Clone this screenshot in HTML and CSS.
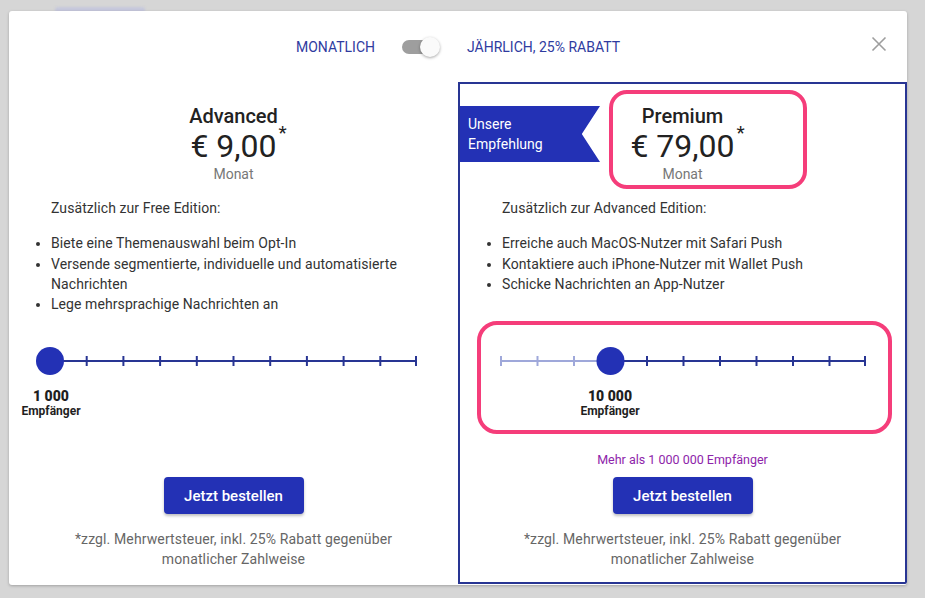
FILE: index.html
```html
<!DOCTYPE html>
<html lang="de">
<head>
<meta charset="utf-8">
<title>Preise</title>
<link rel="stylesheet" href="styles.css">
</head>
<body>
<div class="backdrop-bar"></div>
<div class="modal">
  <header class="topbar">
    <span class="period">Monatlich</span>
    <span class="switch"><span class="switch-track"></span><span class="switch-thumb"></span></span>
    <span class="period">Jährlich, 25% Rabatt</span>
    <button class="close" aria-label="Schließen">
      <svg width="16" height="16" viewBox="0 0 16 16"><path d="M1.5 1.5L14.5 14.5M14.5 1.5L1.5 14.5" stroke="#9e9e9e" stroke-width="1.6" fill="none"/></svg>
    </button>
  </header>
  <div class="plans">
    <section class="plan">
      <div class="plan-head">
        <div class="plan-title">Advanced</div>
        <div class="plan-price"><span class="amount">€ 9,00<sup class="star">*</sup></span></div>
        <div class="plan-unit">Monat</div>
      </div>
      <div class="features">
        <p class="features-intro">Zusätzlich zur Free Edition:</p>
        <ul class="feature-list">
          <li>Biete eine Themenauswahl beim Opt-In</li>
          <li>Versende segmentierte, individuelle und automatisierte Nachrichten</li>
          <li>Lege mehrsprachige Nachrichten an</li>
        </ul>
      </div>
      <div class="slider">
        <svg width="449" height="30" viewBox="0 0 449 30">
          <line x1="41" y1="15" x2="408" y2="15" stroke="#283593" stroke-width="2"/>
          <g stroke="#283593" stroke-width="2">
            <line x1="77.7" y1="10" x2="77.7" y2="20"/>
            <line x1="114.4" y1="10" x2="114.4" y2="20"/>
            <line x1="151.1" y1="10" x2="151.1" y2="20"/>
            <line x1="187.8" y1="10" x2="187.8" y2="20"/>
            <line x1="224.5" y1="10" x2="224.5" y2="20"/>
            <line x1="261.2" y1="10" x2="261.2" y2="20"/>
            <line x1="297.9" y1="10" x2="297.9" y2="20"/>
            <line x1="334.6" y1="10" x2="334.6" y2="20"/>
            <line x1="371.3" y1="10" x2="371.3" y2="20"/>
            <line x1="407" y1="10" x2="407" y2="20"/>
          </g>
          <circle cx="41" cy="15" r="14" fill="#2331b5"/>
        </svg>
      </div>
      <div class="slider-labels">
        <div class="slider-value" style="left:42px"><strong>1 000</strong><span>Empfänger</span></div>
      </div>
      <div class="more"></div>
      <button class="order">Jetzt bestellen</button>
      <p class="footnote">*zzgl. Mehrwertsteuer, inkl. 25% Rabatt gegenüber monatlicher Zahlweise</p>
    </section>

    <section class="plan plan-featured">
      <div class="ribbon">Unsere<br>Empfehlung</div>
      <div class="plan-head">
        <div class="plan-title">Premium</div>
        <div class="plan-price"><span class="amount">€ 79,00<sup class="star">*</sup></span></div>
        <div class="plan-unit">Monat</div>
      </div>
      <div class="features">
        <p class="features-intro">Zusätzlich zur Advanced Edition:</p>
        <ul class="feature-list">
          <li>Erreiche auch MacOS-Nutzer mit Safari Push</li>
          <li>Kontaktiere auch iPhone-Nutzer mit Wallet Push</li>
          <li>Schicke Nachrichten an App-Nutzer</li>
        </ul>
      </div>
      <div class="slider">
        <svg width="445" height="30" viewBox="0 0 445 30">
          <line x1="41" y1="15" x2="150.5" y2="15" stroke="#9fa8da" stroke-width="2"/>
          <line x1="150.5" y1="15" x2="406" y2="15" stroke="#283593" stroke-width="2"/>
          <g stroke="#9fa8da" stroke-width="2">
            <line x1="41" y1="10" x2="41" y2="20"/>
            <line x1="77.5" y1="10" x2="77.5" y2="20"/>
            <line x1="114" y1="10" x2="114" y2="20"/>
          </g>
          <g stroke="#283593" stroke-width="2">
            <line x1="187" y1="10" x2="187" y2="20"/>
            <line x1="223.5" y1="10" x2="223.5" y2="20"/>
            <line x1="260" y1="10" x2="260" y2="20"/>
            <line x1="296.5" y1="10" x2="296.5" y2="20"/>
            <line x1="333" y1="10" x2="333" y2="20"/>
            <line x1="369.5" y1="10" x2="369.5" y2="20"/>
            <line x1="405" y1="10" x2="405" y2="20"/>
          </g>
          <circle cx="150.5" cy="15" r="14" fill="#2331b5"/>
        </svg>
      </div>
      <div class="slider-labels">
        <div class="slider-value" style="left:150px"><strong>10 000</strong><span>Empfänger</span></div>
      </div>
      <div class="more">Mehr als 1 000 000 Empfänger</div>
      <button class="order">Jetzt bestellen</button>
      <p class="footnote">*zzgl. Mehrwertsteuer, inkl. 25% Rabatt gegenüber monatlicher Zahlweise</p>

      <div class="highlight highlight-price"></div>
      <div class="highlight highlight-slider"></div>
    </section>
  </div>
</div>
</body>
</html>
```
FILE: styles.css
```css
* { box-sizing: border-box; }

html, body {
  margin: 0;
  padding: 0;
}

body {
  width: 925px;
  height: 598px;
  overflow: hidden;
  background: #d6d6d6;
  font-family: Roboto, "Noto Sans", Arial, sans-serif;
  color: #333;
  position: relative;
}

.backdrop-bar {
  position: absolute;
  left: 55px;
  top: 7px;
  width: 90px;
  height: 6px;
  border-radius: 3px;
  background: #c6c8dc;
  filter: blur(1px);
}

.modal {
  position: relative;
  margin: 11px 0 0 9px;
  width: 898px;
  height: 574px;
  background: #fff;
  border-radius: 3px;
  box-shadow: 0 1px 3px rgba(0,0,0,0.25);
  display: flex;
  flex-direction: column;
}

.topbar {
  position: relative;
  height: 71px;
  display: flex;
  align-items: center;
  justify-content: center;
  gap: 27px;
}

.period {
  font-size: 14px;
  text-transform: uppercase;
  color: #2f3b9f;
  line-height: 20px;
}

.switch {
  position: relative;
  width: 38px;
  height: 20px;
  display: inline-block;
}

.switch-track {
  position: absolute;
  left: 0;
  top: 3px;
  width: 34px;
  height: 14px;
  border-radius: 7px;
  background: #9e9e9e;
}

.switch-thumb {
  position: absolute;
  right: 0;
  top: 0;
  width: 20px;
  height: 20px;
  border-radius: 50%;
  background: #fafafa;
  box-shadow: 0 1px 3px rgba(0,0,0,0.35);
}

.close {
  position: absolute;
  right: 20px;
  top: 25px;
  width: 16px;
  height: 16px;
  padding: 0;
  border: 0;
  background: none;
  cursor: pointer;
  line-height: 0;
}

.plans {
  flex: 1;
  display: grid;
  grid-template-columns: 449px 449px;
}

.plan {
  position: relative;
  display: flex;
  flex-direction: column;
  align-items: stretch;
  padding-top: 23px;
  text-align: center;
}

.plan-featured {
  border: 2px solid #283593;
  border-bottom-right-radius: 2px;
  padding-top: 21px;
  margin-bottom: 1px;
}

.plan-head {
  display: flex;
  flex-direction: column;
  align-items: center;
}

.plan-title {
  font-size: 20px;
  font-weight: 500;
  line-height: 22px;
  color: #222;
}

.plan-price {
  font-size: 32px;
  line-height: 38px;
  color: #222;
}

.amount {
  position: relative;
}

.star {
  position: absolute;
  left: 100%;
  top: -3px;
  margin-left: 2px;
  font-size: 19px;
  line-height: 18px;
}

.plan-unit {
  font-size: 14px;
  line-height: 18px;
  color: #777;
}

.features {
  height: 163px;
  padding: 15px 42px 0 42px;
  text-align: left;
  font-size: 14px;
  line-height: 20.3px;
  letter-spacing: 0.08px;
  color: #333;
}

.features-intro {
  margin: 0 0 15px 0;
}

.feature-list {
  margin: 0;
  padding: 0;
  list-style: disc outside;
}

.slider {
  height: 30px;
  line-height: 0;
  text-align: left;
}

.slider-labels {
  position: relative;
  height: 74px;
}

.slider-value {
  position: absolute;
  top: 12px;
  transform: translateX(-50%);
  display: flex;
  flex-direction: column;
  align-items: center;
  color: #1f1f1f;
  font-weight: 700;
  white-space: nowrap;
}

.slider-value strong {
  font-size: 14px;
  line-height: 16px;
}

.slider-value span {
  font-size: 12px;
  line-height: 14px;
}

.more {
  height: 20px;
  font-size: 12.5px;
  line-height: 20px;
  color: #8e24aa;
}

.order {
  align-self: center;
  margin-top: 7px;
  width: 140px;
  height: 37px;
  border: 0;
  border-radius: 4px;
  background: #2331b5;
  color: #fff;
  font-family: inherit;
  font-size: 15px;
  font-weight: 500;
  box-shadow: 0 2px 3px rgba(0,0,0,0.25);
  cursor: pointer;
}

.footnote {
  margin: 15px auto 0;
  width: 340px;
  font-size: 14px;
  line-height: 20px;
  letter-spacing: 0.12px;
  color: #666;
}

.ribbon {
  position: absolute;
  left: 0;
  top: 22px;
  width: 140px;
  height: 56px;
  padding: 8px 0 0 8px;
  background: #2331b5;
  color: #fff;
  text-align: left;
  font-size: 14px;
  line-height: 20px;
  clip-path: polygon(0 0, 100% 0, 87% 50%, 100% 100%, 0 100%);
}

.highlight {
  position: absolute;
  border: 4px solid #f53d7a;
  pointer-events: none;
}

.highlight-price {
  left: 149px;
  top: 6px;
  width: 198px;
  height: 99px;
  border-radius: 18px;
}

.highlight-slider {
  left: 17px;
  top: 237px;
  width: 415px;
  height: 113px;
  border-radius: 20px;
}
```
